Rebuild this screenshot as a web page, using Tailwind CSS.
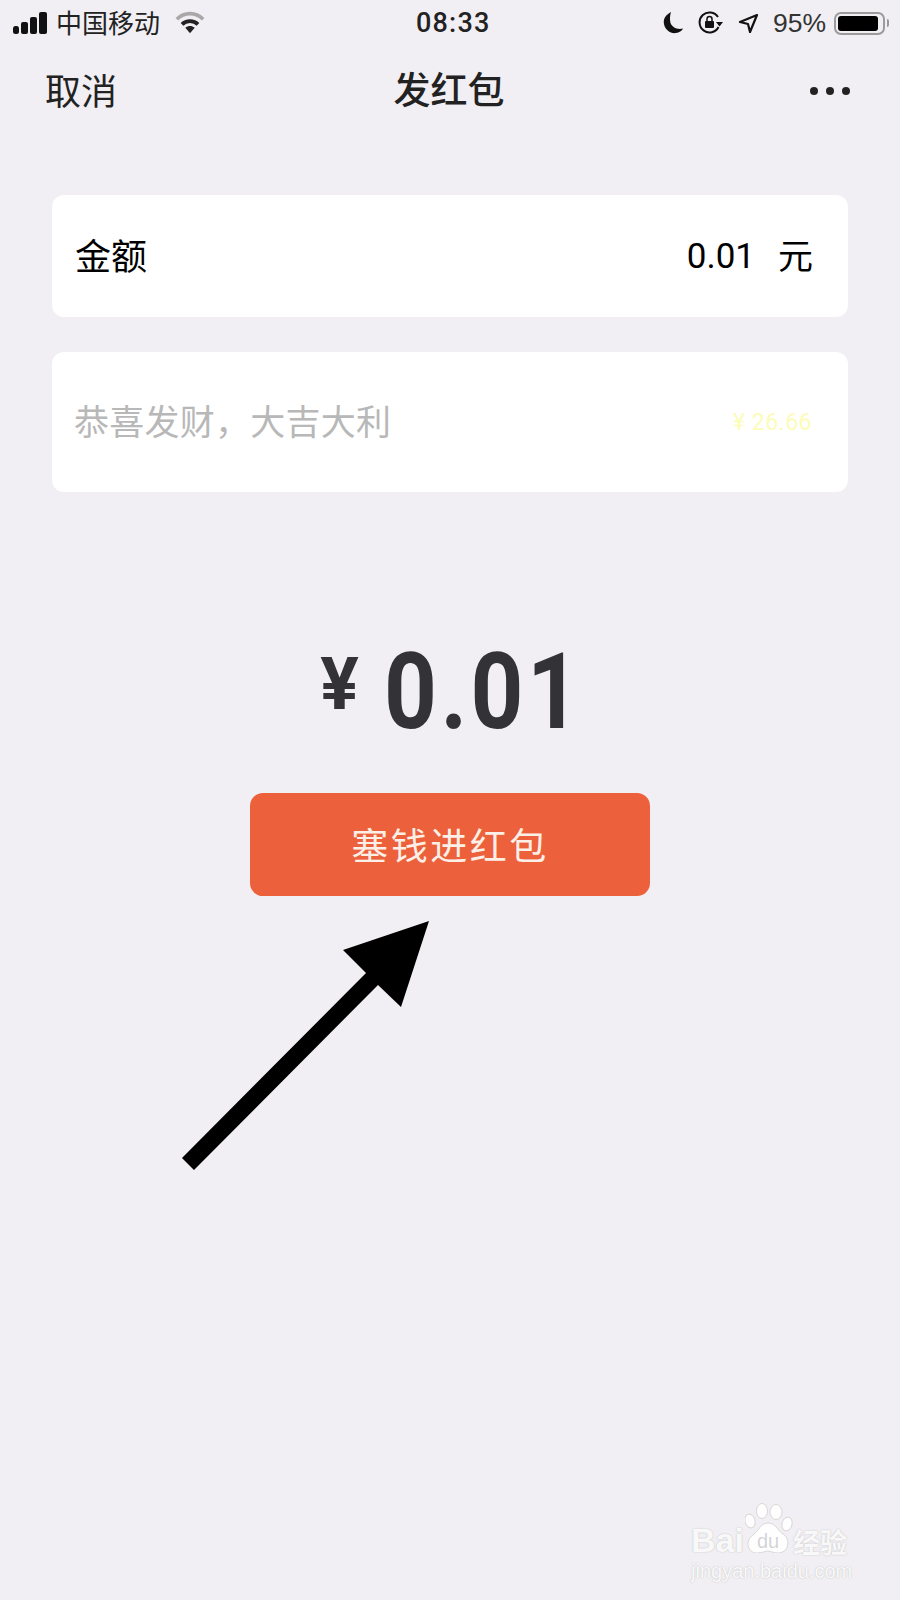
<!DOCTYPE html>
<html lang="zh-CN">
<head>
  <meta charset="UTF-8" />
  <meta name="viewport" content="width=device-width, initial-scale=1.0" />
  <title>发红包</title>
  <script src="https://cdn.jsdelivr.net/npm/@tailwindcss/browser@4"></script>
</head>
<body class="bg-[#f1eff3] font-['Noto_Sans_CJK_SC','Noto_Sans',sans-serif]">
  <div class="relative w-[900px] h-[1600px] overflow-hidden">

    <!-- status bar -->
    <div class="relative flex items-center h-[46px] pl-[13px] text-[#222]">
      <svg width="35" height="23" viewBox="0 0 35 23" fill="#111">
        <rect x="0" y="14" width="6" height="8" rx="2.5" />
        <rect x="8" y="10" width="7" height="12" rx="2" />
        <rect x="17" y="5" width="7" height="17" rx="2" />
        <rect x="26" y="0" width="8" height="22" rx="2" />
      </svg>
      <span class="ml-[8px] mb-[3px] text-[26px] leading-none">中国移动</span>
      <svg class="ml-[15px]" width="30" height="24" viewBox="0 0 32 24">
        <path d="M2 8 C10 0 22 0 30 8" fill="none" stroke="#a8a8a8" stroke-width="4" />
        <path d="M7.500 13.500 C12 9 20 9 24.500 13.500" fill="none" stroke="#222" stroke-width="4" />
        <path d="M11 17 C14 14.500 18 14.500 21 17 L16 23 Z" fill="#222" />
      </svg>
      <span class="absolute left-[416px] top-[9px] text-[27px] leading-[28px] font-medium font-['Roboto',sans-serif] tracking-[1.200px]">08:33</span>
      <div class="ml-auto flex items-center h-full pr-[11px]">
        <svg width="21" height="22" viewBox="0 0 21 22" fill="#111">
          <path d="M8 0 C2.500 3 0 7 1 12 C2 18 8 22 13 21 C16 20.500 19 19 20 16.500 C14 18 9 15 7.500 11 C6.500 7 7 3 8 0 Z" />
        </svg>
        <svg class="ml-[13px]" width="27" height="24" viewBox="0 0 27 24" fill="none" stroke="#111">
          <path d="M21 6 A10 10 0 1 0 21.500 16" stroke-width="2" />
          <path d="M19 11 L26 11 L22.500 15.500 Z" fill="#111" stroke="none" />
          <rect x="8" y="10" width="9" height="7" rx="1" fill="#111" stroke="none" />
          <path d="M10 10 V8 A2.500 2.500 0 0 1 15 8 V10" stroke-width="1.500" />
        </svg>
        <svg class="ml-[14px]" width="21" height="21" viewBox="0 0 21 21" fill="none" stroke="#111" stroke-width="2.200" stroke-linejoin="round">
          <path d="M19 2 L2 9 L10 11 L12 19 Z" />
        </svg>
        <span class="ml-[14px] text-[26.500px] leading-none font-['Liberation_Sans',sans-serif] text-[#333]">95%</span>
        <div class="ml-[8px] flex items-center">
          <div class="w-[51px] h-[23px] rounded-[7px] border-2 border-[#9b9b9b] p-[2px]">
            <div class="h-full w-[40px] bg-black rounded-[3px]"></div>
          </div>
          <div class="ml-[2px] w-[2px] h-[8px] bg-[#999] rounded-r-full"></div>
        </div>
      </div>
    </div>

    <!-- nav bar -->
    <div class="relative flex items-center justify-between h-[92px] pl-[45px] pr-[50px]">
      <span class="mb-[6px] text-[36px] leading-none text-[#222]">取消</span>
      <span class="absolute left-0 right-[2px] top-[24px] text-center text-[37px] leading-none font-medium text-[#222]">发红包</span>
      <div class="mb-[2px] flex gap-[8px]">
        <div class="w-[8px] h-[8px] rounded-full bg-[#222]"></div>
        <div class="w-[8px] h-[8px] rounded-full bg-[#222]"></div>
        <div class="w-[8px] h-[8px] rounded-full bg-[#222]"></div>
      </div>
    </div>

    <!-- form -->
    <div class="mt-[57px] ml-[52px] w-[796px] flex flex-col gap-[35px]">
      <div class="flex items-center justify-between h-[122px] pl-[23px] pr-[35px] pb-[4px] bg-white rounded-[12px]">
        <span class="text-[36px] leading-none text-black">金额</span>
        <div class="flex items-center text-black">
          <span class="mt-[4px] text-[35px] leading-none font-['Roboto',sans-serif]">0.01</span>
          <span class="ml-[23px] mb-[1px] text-[35px] leading-none">元</span>
        </div>
      </div>
      <div class="flex items-center justify-between h-[140px] pl-[22px] pr-[36px] bg-white rounded-[12px]">
        <span class="mb-[6px] text-[35px] leading-none tracking-[0.250px] text-[#b8b8b8]">恭喜发财，大吉大利</span>
        <span class="text-[23px] leading-none font-['Roboto',sans-serif] text-[#fcfcb8] tracking-[0.500px]">¥ 26.66</span>
      </div>
    </div>

    <!-- amount -->
    <div class="mt-[130px] h-[130px] flex justify-center items-start pr-[12px] text-[#333236] font-['Roboto',sans-serif]">
      <span class="mt-[13px] text-[72px] leading-[100px] font-bold">¥</span>
      <span class="ml-[25px] mt-[5px] text-[106px] leading-[130px] font-bold origin-left [transform:scaleX(0.87)] tracking-[4px] w-[184px] whitespace-nowrap">0.01</span>
    </div>

    <!-- button -->
    <div class="mt-[41px] ml-[250px] w-[400px] h-[103px] flex items-center justify-center bg-[#ec613b] rounded-[13px]">
      <span class="text-[37px] leading-none tracking-[2.500px] text-[#fcefe8]">塞钱进红包</span>
    </div>

    <!-- annotation arrow -->
    <svg class="absolute left-0 top-0" width="900" height="1600" viewBox="0 0 900 1600">
      <path d="M429 921 L343 950 L366 973 L182 1158 L194 1170 L378 985 L401 1007 Z" fill="#000" />
    </svg>

    <!-- watermark -->
    <div class="absolute left-[691px] top-[1501px] w-[170px] text-white/90">
      <div class="flex items-end h-[54px]">
        <span class="mb-[-4px] text-[34px] leading-[38px] font-bold font-['Liberation_Sans',sans-serif] [text-shadow:0_0_1.500px_#b4b4b4]">Bai</span>
        <svg width="48" height="50" viewBox="0 0 48 50" fill="#fff" fill-opacity="0.9" stroke="#cacaca" stroke-width="0.700" class="ml-[1px] mb-[2px] shrink-0">
          <ellipse cx="5" cy="18" rx="5" ry="7" transform="rotate(-15 5 18)" />
          <ellipse cx="17" cy="8" rx="5.500" ry="7.500" />
          <ellipse cx="31" cy="9" rx="6" ry="7.500" />
          <ellipse cx="42" cy="21" rx="5" ry="7" transform="rotate(15 42 21)" />
          <path d="M23 20 C31 20 32 27 38 31 C46 36 44 50 33 50 C28 50 26 48 23 48 C20 48 17 50 12 50 C2 50 0 37 8 32 C14 28 15 20 23 20 Z" />
          <text x="23" y="45" text-anchor="middle" font-size="20" font-family="Liberation Sans" fill="#cfced2" stroke="none">du</text>
        </svg>
        <span class="mb-[-4px] text-[27px] leading-[34px] font-bold [text-shadow:0_0_1.500px_#b4b4b4]">经验</span>
      </div>
      <div class="mt-[3px] text-[20px] leading-[26px] font-['Liberation_Sans',sans-serif] whitespace-nowrap [text-shadow:0_0_1.500px_#b4b4b4]">jingyan.baidu.com</div>
    </div>
  </div>
</body>
</html>
